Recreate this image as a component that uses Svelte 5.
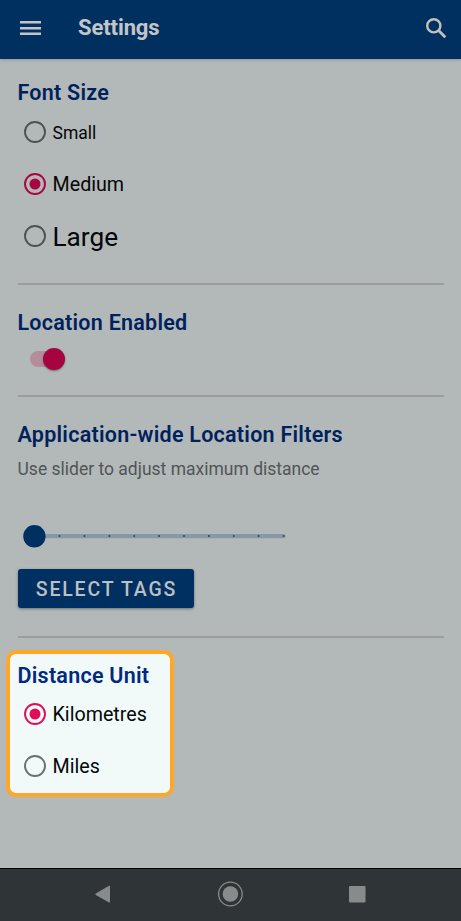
<script>
  let fontSize = $state('Medium');
  let unit = $state('Kilometres');
  const sizes = [
    { name: 'Small', cls: 'small' },
    { name: 'Medium', cls: 'medium' },
    { name: 'Large', cls: 'large' }
  ];
  const units = ['Kilometres', 'Miles'];
  const ticks = Array.from({ length: 10 }, (_, i) => 25 * (i + 1));
</script>

{#snippet radio(on)}
  <svg class="radio" class:on width="24" height="24" viewBox="0 0 24 24">
    <circle cx="12" cy="12" r="10" fill="none" stroke="currentColor" stroke-width="1.9" />
    {#if on}<circle cx="12" cy="12" r="5.5" fill="currentColor" />{/if}
  </svg>
{/snippet}

<div class="screen">
  <header>
    <svg class="menu" width="22" height="16" viewBox="0 0 22 16">
      <path d="M0 2.2H21M0 8.2H21M0 13.7H21" stroke="currentColor" stroke-width="2.4" />
    </svg>
    <h1><span>Settings</span></h1>
    <svg class="search" width="22" height="22" viewBox="0 0 22 22" fill="none" stroke="currentColor" stroke-width="2.4">
      <circle cx="8.8" cy="8.8" r="6.6" />
      <path d="M13.6 13.6L20.3 20.2" stroke-width="2.8" />
    </svg>
  </header>

  <main>
    <section class="font">
      <h2>Font Size</h2>
      {#each sizes as s}
        <button class="option {s.cls}" onclick={() => (fontSize = s.name)}>
          {@render radio(fontSize === s.name)}<span>{s.name}</span>
        </button>
      {/each}
    </section>

    <section class="location">
      <h2>Location Enabled</h2>
      <div class="switch"><i></i></div>
    </section>

    <section class="filters">
      <h2>Application-wide Location Filters</h2>
      <p>Use slider to adjust maximum distance</p>
      <svg class="slider" width="270" height="24" viewBox="0 0 270 24">
        <rect x="11" y="10" width="251.5" height="4.2" rx="2" fill="#8799a7" />
        {#each ticks as t}
          <circle cx={11.6 + t * 0.996} cy="12.1" r="1" fill="#1d4870" />
        {/each}
        <circle cx="11.4" cy="12.3" r="11.2" fill="#003061" />
      </svg>
      <button class="tags">SELECT TAGS</button>
    </section>

    <section class="unit">
      <h2>Distance Unit</h2>
      {#each units as u}
        <button class="option medium" onclick={() => (unit = u)}>
          {@render radio(unit === u)}<span>{u}</span>
        </button>
      {/each}
    </section>
  </main>

  <nav>
    <svg width="461" height="52" viewBox="0 0 461 52" fill="#888b8c">
      <path d="M95.8 24.4L108.6 16.9Q110 16.2 110 17.6V32.6Q110 34 108.6 33.2L95.8 25.9Q94.8 25.1 95.8 24.4Z" />
      <circle cx="230.4" cy="25" r="7.8" />
      <circle cx="230.4" cy="25" r="11.8" fill="none" stroke="#888b8c" stroke-width="1.3" />
      <rect x="349" y="17" width="16.5" height="16.5" rx="1" />
    </svg>
  </nav>
</div>

<style>
  :global(body) {
    margin: 0;
    overflow: hidden;
  }
  .screen {
    width: 461px;
    height: 921px;
    display: flex;
    flex-direction: column;
    background: #b3b9b9;
    font-family: Roboto, 'Liberation Sans', sans-serif;
    overflow: hidden;
    white-space: nowrap;
  }
  header {
    flex: none;
    height: 59px;
    box-sizing: border-box;
    display: flex;
    align-items: flex-start;
    background: #00305f;
    color: #c5c5c8;
    box-shadow: 0 1px 3px rgba(0, 0, 0, 0.2);
  }
  .menu {
    margin: 20px 0 0 20px;
  }
  h1 {
    flex: 1;
    margin: 15px 0 0 36px;
    font-size: 22px;
    line-height: 26px;
    font-weight: 700;
    letter-spacing: -0.1px;
  }
  .search {
    margin: 17px 14px 0 0;
    color: #c0c0bd;
  }
  main {
    flex: 1;
    display: flex;
    flex-direction: column;
  }
  section {
    box-sizing: border-box;
    flex: none;
    margin: 0 17px 0 17.5px;
    display: flex;
    flex-direction: column;
    align-items: flex-start;
  }
  .font,
  .location,
  .filters {
    border-bottom: 2px solid #9b9c9f;
  }
  h2 {
    margin: 0;
    font-size: 21.5px;
    line-height: 26px;
    font-weight: 600;
    letter-spacing: 0.25px;
    color: #00225c;
  }
  button {
    border: 0;
    padding: 0;
    background: none;
    font: inherit;
  }
  .option {
    height: 52px;
    display: flex;
    align-items: center;
    gap: 6px;
    padding-left: 5px;
    color: #050608;
  }
  .option span {
    padding-top: 2px;
    font-weight: 370;
  }
  .radio {
    color: #4f5254;
  }
  .radio.on {
    color: #a90543;
  }
  .small {
    font-size: 17.5px;
  }
  .medium {
    font-size: 19.7px;
  }
  .large {
    font-size: 26.2px;
  }
  .font {
    height: 226px;
    padding-top: 20.5px;
  }
  .location {
    height: 112px;
    padding-top: 24.5px;
  }
  .switch {
    margin: 15px 0 0 12px;
    width: 35px;
    height: 16px;
    border-radius: 8px;
    display: flex;
    align-items: center;
    justify-content: flex-end;
    background: linear-gradient(90deg, #b48d9c 24px, transparent 24px);
  }
  .switch i {
    width: 22px;
    height: 22px;
    border-radius: 50%;
    background: #a60441;
    box-shadow: 0 1px 2px rgba(0, 0, 0, 0.4);
  }
  .filters {
    height: 240.5px;
    padding-top: 24.5px;
  }
  p {
    margin: 9.5px 0 0;
    font-size: 17.5px;
    line-height: 24px;
    font-weight: 370;
    color: #515557;
  }
  .slider {
    margin: 43px 0 0 5px;
  }
  .tags {
    margin-top: 21px;
    width: 176px;
    height: 39px;
    border-radius: 3px;
    background: #003061;
    color: #bdbfc1;
    font-size: 19.5px;
    font-weight: 500;
    letter-spacing: 1.8px;
    padding: 1px 0 0 2px;
    text-align: center;
    box-shadow: 0 1px 3px rgba(0, 0, 0, 0.4);
  }
  .unit {
    width: 168px;
    height: 147px;
    margin: 12.5px 0 0 5.5px;
    padding: 8.5px 0 0 8px;
    border: 4px solid #ffa726;
    border-radius: 10px;
    background: #f1faf9;
  }
  .unit h2 {
    color: #002a80;
    margin-bottom: -0.6px;
  }
  .unit .radio {
    color: #6c6e6f;
  }
  .unit .radio.on {
    color: #df0e59;
  }
  nav {
    flex: none;
    height: 53px;
    box-sizing: border-box;
    border-top: 1px solid #000;
    background: #2f3537;
  }
  nav svg {
    display: block;
  }
</style>
